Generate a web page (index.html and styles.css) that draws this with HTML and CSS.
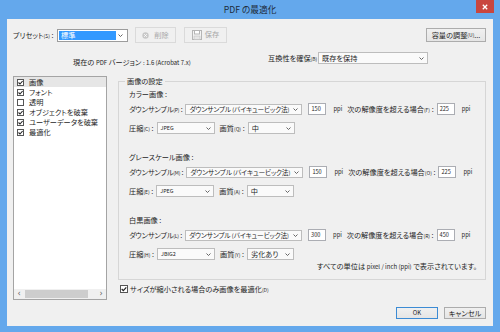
FILE: index.html
```html
<!DOCTYPE html>
<html lang="ja">
<head>
<meta charset="utf-8">
<title>PDF の最適化</title>
<link rel="stylesheet" href="styles.css">
</head>
<body>
<div class="window">
  <div class="titlebar">
    <span></span>
    <div class="title">PDF の最適化</div>
    <div class="close"><svg width="6" height="6" viewBox="0 0 6 6"><path d="M0.8 0.8L5.2 5.2M5.2 0.8L0.8 5.2" stroke="#fff" stroke-width="1.3"/></svg></div>
  </div>
  <div class="content">
    <div class="row-a">
      <span class="lbl preset-lbl">プリセット<span class="k">(S)</span> :</span>
      <div class="combo preset"><span class="hl">標準</span><svg class="chev" width="5" height="3" viewBox="0 0 5 3"><path d="M0.5 0.5L2.5 2.5L4.5 0.5" fill="none" stroke="#555" stroke-width="0.9"/></svg></div>
      <div class="btn dis del"><svg width="7" height="7" viewBox="0 0 7 7"><circle cx="3.5" cy="3.5" r="3.2" fill="#c8c8c8"/><path d="M2.2 2.2L4.8 4.8M4.8 2.2L2.2 4.8" stroke="#fff" stroke-width="0.9"/></svg><span>削除</span></div>
      <div class="btn dis save"><svg width="10" height="10" viewBox="0 0 10 10"><rect x="0.5" y="0.5" width="9" height="9" fill="#f4f4f4" stroke="#b5b5b5"/><rect x="2.5" y="0.5" width="5" height="3.5" fill="#fff" stroke="#b5b5b5"/><rect x="2" y="6" width="6" height="3.5" fill="#e6e6e6" stroke="#c0c0c0" stroke-width="0.6"/></svg><span class="save-t">保存</span></div>
      <div class="btn adjust">容量の調整<span class="k">(U)</span>...</div>
    </div>
    <div class="row-b">
      <span class="ver">現在の <span class="sm">PDF</span> バージョン <span class="sm">: 1.6 (Acrobat 7.x)</span></span>
      <span class="lbl">互換性を確保<span class="k">(B)</span> :</span>
      <div class="combo compat"><span class="ct">既存を保持</span><svg class="chev" width="5" height="3" viewBox="0 0 5 3"><path d="M0.5 0.5L2.5 2.5L4.5 0.5" fill="none" stroke="#555" stroke-width="0.9"/></svg></div>
    </div>
    <div class="main">
      <div class="list">
        <ul class="items">
          <li class="item sel"><svg class="cb" width="7" height="7" viewBox="0 0 7 7"><rect x=".5" y=".5" width="6" height="6" fill="#fff" stroke="#555"/><path d="M1.5 3.5L3 5L5.6 2" fill="none" stroke="#222" stroke-width="1.1"/></svg><span>画像</span></li>
          <li class="item"><svg class="cb" width="7" height="7" viewBox="0 0 7 7"><rect x=".5" y=".5" width="6" height="6" fill="#fff" stroke="#555"/><path d="M1.5 3.5L3 5L5.6 2" fill="none" stroke="#222" stroke-width="1.1"/></svg><span>フォント</span></li>
          <li class="item"><svg class="cb" width="7" height="7" viewBox="0 0 7 7"><rect x=".5" y=".5" width="6" height="6" fill="#fff" stroke="#555"/></svg><span>透明</span></li>
          <li class="item"><svg class="cb" width="7" height="7" viewBox="0 0 7 7"><rect x=".5" y=".5" width="6" height="6" fill="#fff" stroke="#555"/><path d="M1.5 3.5L3 5L5.6 2" fill="none" stroke="#222" stroke-width="1.1"/></svg><span>オブジェクトを破棄</span></li>
          <li class="item"><svg class="cb" width="7" height="7" viewBox="0 0 7 7"><rect x=".5" y=".5" width="6" height="6" fill="#fff" stroke="#555"/><path d="M1.5 3.5L3 5L5.6 2" fill="none" stroke="#222" stroke-width="1.1"/></svg><span>ユーザーデータを破棄</span></li>
          <li class="item"><svg class="cb" width="7" height="7" viewBox="0 0 7 7"><rect x=".5" y=".5" width="6" height="6" fill="#fff" stroke="#555"/><path d="M1.5 3.5L3 5L5.6 2" fill="none" stroke="#222" stroke-width="1.1"/></svg><span>最適化</span></li>
        </ul>
        <div class="hscroll">
          <span class="arr">&lsaquo;</span>
          <span class="thumb"></span>
          <span class="arr right">&rsaquo;</span>
        </div>
      </div>
      <div class="rightcol">
        <fieldset class="group">
          <legend>画像の設定</legend>
          <div class="sec">
            <div class="sec-h">カラー画像 :</div>
            <div class="row-ds">
              <span class="lbl dsl">ダウンサンプル<span class="k">(P)</span> :</span>
              <div class="combo ds"><span class="ct">ダウンサンプル <span class="par">(</span>バイキュービック法<span class="par">)</span></span><svg class="chev" width="5" height="3" viewBox="0 0 5 3"><path d="M0.5 0.5L2.5 2.5L4.5 0.5" fill="none" stroke="#555" stroke-width="0.9"/></svg></div>
              <span class="inp">150</span>
              <span class="ppi">ppi</span>
              <span class="lbl over">次の解像度を超える場合<span class="k">(F)</span> :</span>
              <span class="inp inp2">225</span>
              <span class="ppi">ppi</span>
            </div>
            <div class="row-cp">
              <span class="lbl">圧縮<span class="k">(C)</span> :</span>
              <div class="combo cmp"><span class="ct xs">JPEG</span><svg class="chev" width="5" height="3" viewBox="0 0 5 3"><path d="M0.5 0.5L2.5 2.5L4.5 0.5" fill="none" stroke="#555" stroke-width="0.9"/></svg></div>
              <span class="lbl q">画質<span class="k">(Q)</span> :</span>
              <div class="combo qual"><span class="ct">中</span><svg class="chev" width="5" height="3" viewBox="0 0 5 3"><path d="M0.5 0.5L2.5 2.5L4.5 0.5" fill="none" stroke="#555" stroke-width="0.9"/></svg></div>
            </div>
          </div>
          <div class="sec">
            <div class="sec-h">グレースケール画像 :</div>
            <div class="row-ds">
              <span class="lbl dsl">ダウンサンプル<span class="k">(M)</span> :</span>
              <div class="combo ds"><span class="ct">ダウンサンプル <span class="par">(</span>バイキュービック法<span class="par">)</span></span><svg class="chev" width="5" height="3" viewBox="0 0 5 3"><path d="M0.5 0.5L2.5 2.5L4.5 0.5" fill="none" stroke="#555" stroke-width="0.9"/></svg></div>
              <span class="inp">150</span>
              <span class="ppi">ppi</span>
              <span class="lbl over">次の解像度を超える場合<span class="k">(O)</span> :</span>
              <span class="inp inp2">225</span>
              <span class="ppi">ppi</span>
            </div>
            <div class="row-cp">
              <span class="lbl">圧縮<span class="k">(E)</span> :</span>
              <div class="combo cmp"><span class="ct xs">JPEG</span><svg class="chev" width="5" height="3" viewBox="0 0 5 3"><path d="M0.5 0.5L2.5 2.5L4.5 0.5" fill="none" stroke="#555" stroke-width="0.9"/></svg></div>
              <span class="lbl q">画質<span class="k">(A)</span> :</span>
              <div class="combo qual"><span class="ct">中</span><svg class="chev" width="5" height="3" viewBox="0 0 5 3"><path d="M0.5 0.5L2.5 2.5L4.5 0.5" fill="none" stroke="#555" stroke-width="0.9"/></svg></div>
            </div>
          </div>
          <div class="sec">
            <div class="sec-h">白黒画像 :</div>
            <div class="row-ds">
              <span class="lbl dsl">ダウンサンプル<span class="k">(L)</span> :</span>
              <div class="combo ds"><span class="ct">ダウンサンプル <span class="par">(</span>バイキュービック法<span class="par">)</span></span><svg class="chev" width="5" height="3" viewBox="0 0 5 3"><path d="M0.5 0.5L2.5 2.5L4.5 0.5" fill="none" stroke="#555" stroke-width="0.9"/></svg></div>
              <span class="inp">300</span>
              <span class="ppi">ppi</span>
              <span class="lbl over">次の解像度を超える場合<span class="k">(R)</span> :</span>
              <span class="inp inp2">450</span>
              <span class="ppi">ppi</span>
            </div>
            <div class="row-cp">
              <span class="lbl">圧縮<span class="k">(H)</span> :</span>
              <div class="combo cmp"><span class="ct xs">JBIG2</span><svg class="chev" width="5" height="3" viewBox="0 0 5 3"><path d="M0.5 0.5L2.5 2.5L4.5 0.5" fill="none" stroke="#555" stroke-width="0.9"/></svg></div>
              <span class="lbl q">画質<span class="k">(Y)</span> :</span>
              <div class="combo qual"><span class="ct">劣化あり</span><svg class="chev" width="5" height="3" viewBox="0 0 5 3"><path d="M0.5 0.5L2.5 2.5L4.5 0.5" fill="none" stroke="#555" stroke-width="0.9"/></svg></div>
            </div>
          </div>
          <div class="units">すべての単位は <span class="sm">pixel / inch (ppi)</span> で表示されています。</div>
        </fieldset>
        <div class="opt"><svg class="cb" width="8" height="8" viewBox="0 0 8 8"><rect x=".5" y=".5" width="7" height="7" fill="#fff" stroke="#555"/><path d="M1.7 4L3.3 5.6L6.3 2.3" fill="none" stroke="#222" stroke-width="1.2"/></svg><span>サイズが縮小される場合のみ画像を最適化<span class="k">(D)</span></span></div>
      </div>
    </div>
    <div class="footer">
      <div class="btn ok"><span class="sm">OK</span></div>
      <div class="btn cancel">キャンセル</div>
    </div>
  </div>
</div>
</body>
</html>
```

FILE: styles.css
```css
* { box-sizing: border-box; margin: 0; padding: 0; }
html, body { width: 500px; height: 332px; overflow: hidden; }
body {
  font-family: "Noto Sans CJK JP", "Noto Sans", sans-serif;
  font-size: 7.2px;
  line-height: 10px;
  color: #1e1e1e;
  font-feature-settings: "palt";
  background: #64a8ec;
}
ul { list-style: none; }
.window {
  display: flex;
  flex-direction: column;
  height: 332px;
  background: #64a8ec;
}
.titlebar {
  height: 19px;
  display: grid;
  grid-template-columns: 1fr auto 1fr;
  align-items: start;
}
.title {
  font-size: 8.7px;
  line-height: 19px;
  color: #1d2b3a;
}
.close {
  justify-self: end;
  margin-right: 6px;
  width: 18px;
  height: 13px;
  background: #c9463f;
  display: flex;
  align-items: center;
  justify-content: center;
}
.content {
  flex: 1;
  margin: 0 7px 6px 7px;
  background: #f0f0f0;
  padding: 8px 7px 0 6px;
  display: flex;
  flex-direction: column;
}
.k { font-size: 5px; }
.sm { font-size: 6px; }
.xs { font-size: 5.4px; }
.par { font-size: 5.6px; }

/* row a */
.row-a { display: flex; align-items: center; height: 16px; }
.preset-lbl { width: 44px; white-space: nowrap; }
.combo {
  display: flex;
  align-items: center;
  background: #fafafa;
  border: 1px solid #bdbdbd;
  height: 12px;
}
.combo .ct { flex: 1; padding-left: 3px; white-space: nowrap; overflow: hidden; }
.chev { margin: 0 3px 0 2px; flex: none; }
.combo.preset { width: 71px; height: 13px; padding: 1px; background: #fff; border-color: #9c9c9c; }
.hl { flex: 1; height: 100%; background: #3399ff; color: #fff; padding-left: 2px; line-height: 9px; }
.btn {
  display: flex;
  align-items: center;
  justify-content: center;
  border: 1px solid #acacac;
  background: linear-gradient(#f0f0f0, #e5e5e5);
}
.btn.dis { border-color: #dadada; background: #f0f0f0; color: #a8a8a8; }
.del { margin-left: 7px; width: 41px; height: 16px; gap: 5px; }
.save { margin-left: 8px; width: 43px; height: 16px; gap: 3px; align-items: flex-start; padding-top: 2px; }
.save-t { line-height: 8px; }
.adjust { margin-left: auto; width: 60px; height: 14px; white-space: nowrap; }

/* row b */
.row-b { display: flex; align-items: flex-start; margin-top: 9px; height: 14px; }
.ver { margin-left: 60px; width: 195px; margin-top: 5px; white-space: nowrap; }
.row-b .lbl { line-height: 12px; width: 50px; white-space: nowrap; }
.combo.compat { width: 110px; height: 12px; }

/* main */
.main { display: flex; margin-top: 10px; height: 224px; }
.list {
  width: 94px;
  height: 224px;
  background: #fff;
  border: 1px solid #a4a4a4;
  display: flex;
  flex-direction: column;
}
.item { display: flex; align-items: center; height: 10px; padding-left: 3px; white-space: nowrap; }
.item.sel { background: #e6e6e6; }
.item .cb { margin-right: 5px; flex: none; }
.hscroll {
  margin-top: auto;
  height: 10px;
  display: flex;
  align-items: center;
  background: #f0f0f0;
}
.arr { width: 10px; text-align: center; color: #606060; font-size: 8px; line-height: 10px; font-family: "DejaVu Sans", sans-serif; }
.arr.right { margin-left: auto; }
.thumb { margin-left: 1px; width: 63px; height: 8px; background: #cdcdcd; }

.rightcol { margin-left: 11px; width: 368px; display: flex; flex-direction: column; }
.group {
  width: 368px;
  height: 204px;
  border: 1px solid #d6d6d6;
  padding: 3px 8px 0 10px;
  min-inline-size: 0;
}
.group legend { padding: 0 2px; margin-left: -4px; line-height: 10px; }
.sec + .sec { margin-top: 18px; }
.sec-h { line-height: 10px; }
.row-ds, .row-cp { display: flex; align-items: center; height: 12px; white-space: nowrap; }
.row-ds { margin-top: 4px; }
.row-cp { margin-top: 7px; }
.dsl { letter-spacing: -0.2px; }
.combo.ds { margin-left: 3px; width: 117px; height: 11px; }
.combo.ds .ct { font-size: 6.7px; letter-spacing: -0.15px; }
.combo.cmp { margin-left: 3px; width: 58px; height: 12px; }
.combo.qual { margin-left: 3px; width: 47px; height: 12px; }
.lbl.q { margin-left: 5px; }
.inp {
  margin-left: 6px;
  width: 18px;
  height: 12px;
  background: #fff;
  border: 1px solid #abadb3;
  font-size: 5.6px;
  line-height: 10px;
  padding-left: 2px;
}
.inp2 { margin-left: 3px; }
.ppi { margin-left: 7px; font-size: 5.8px; }
.lbl.over { margin-left: 5px; }
.units { margin-top: 1px; text-align: right; line-height: 10px; white-space: nowrap; }

.opt { display: flex; align-items: center; margin-top: 4px; padding-left: 2px; height: 10px; white-space: nowrap; }
.opt .cb { margin-right: 2px; }

/* footer */
.footer { display: flex; justify-content: flex-end; gap: 6px; margin-top: 7px; }
.footer .btn { width: 42px; height: 12px; }
.btn.ok { border-color: #3c8bd4; }
```
